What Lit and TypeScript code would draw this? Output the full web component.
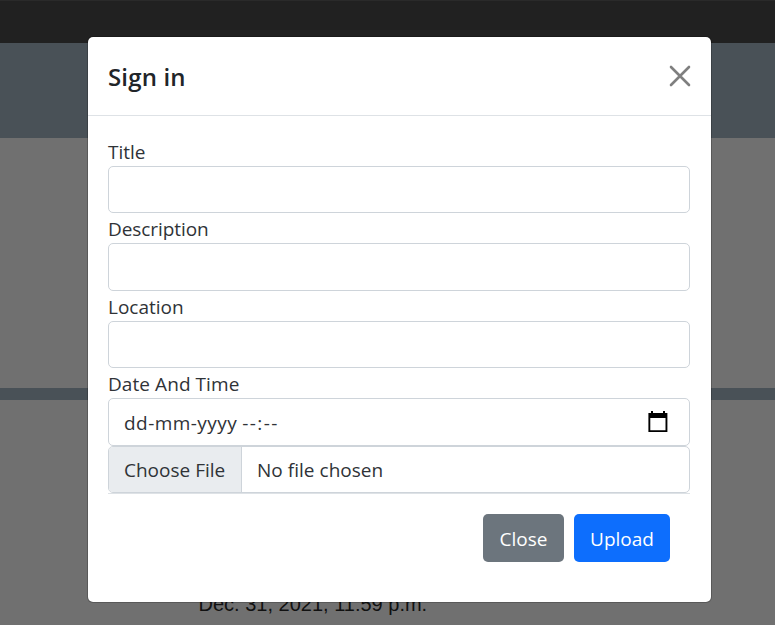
import { LitElement, html, css } from "lit";
import { customElement } from "lit/decorators.js";

@customElement("app-root")
export class AppRoot extends LitElement {
  static styles = css`
    :host {
      display: block;
      position: relative;
      width: 775px;
      height: 625px;
      overflow: hidden;
      background: #707070;
      color: #2f3337;
      font: 400 19px/30px "Open Sans", "Noto Sans", sans-serif;
    }
    * { box-sizing: border-box; }
    .page { height: 625px; display: flex; flex-direction: column; }
    .nav { height: 43px; background: #212121; border-top: 1px solid #2a2a2a; }
    .hero { height: 95px; background: #495157; }
    .rule { height: 12px; margin-top: 250px; background: #495157; }
    .date {
      margin: 193px 0 0 198.5px;
      font: 20px/23px "Liberation Sans", Arial, sans-serif;
      color: #111;
      white-space: nowrap;
    }
    .overlay {
      position: absolute;
      inset: 0;
      display: flex;
      align-items: flex-start;
      padding: 36px 0 0 87px;
    }
    .modal {
      width: 625px;
      height: 567px;
      background: #fff;
      background-clip: padding-box;
      border: 1px solid rgba(0, 0, 0, 0.2);
      border-radius: 6px;
    }
    .header {
      display: flex;
      align-items: center;
      justify-content: space-between;
      height: 79px;
      padding: 0 20px;
      border-bottom: 1px solid #dee2e6;
    }
    h5 {
      margin: 0;
      padding-top: 2px;
      color: #212529;
      font-size: 24px;
      line-height: 38px;
      font-weight: 600;
      letter-spacing: 0.15px;
    }
    .x { display: block; width: 22px; height: 22px; }
    .body { padding: 20px 21px 0 20px; }
    label { display: block; height: 30px; padding-top: 1px; }
    span, h5 { white-space: nowrap; }
    .control {
      display: flex;
      align-items: center;
      height: 47.4px;
      border: 1px solid #ced4da;
      border-radius: 5px;
      background: #fff;
      overflow: hidden;
    }
    .when { justify-content: space-between; padding: 0 21px 0 15px; }
    .when div { padding-top: 2px; }
    .day { letter-spacing: 0.45px; }
    .clock { letter-spacing: 1.45px; }
    .pick {
      height: 100%;
      width: 133px;
      padding: 8px 0 0 15px;
      background: #e9ecef;
      border-right: 1px solid #ced4da;
    }
    .none { padding: 1px 0 0 15px; }
    .none span { letter-spacing: 0.03px; }
    .description { letter-spacing: -0.07px; }
    .datetime { letter-spacing: 0.07px; }
    .footer {
      display: flex;
      justify-content: flex-end;
      gap: 10px;
      border-top: 1px solid #dee2e6;
      padding: 20px 20px 0 0;
    }
    .btn {
      height: 48px;
      border: 0;
      border-radius: 5px;
      padding: 2px 0 0;
      color: #fff;
      font: inherit;
    }
    .close { width: 81px; background: #6c757d; }
    .upload { width: 96px; background: #0d6efd; }
  `;

  render() {
    return html`
      <div class="page">
        <div class="nav"></div>
        <div class="hero"></div>
        <div class="rule"></div>
        <div class="date"><span>Dec. 31, 2021, 11:59 p.m.</span></div>
      </div>
      <div class="overlay">
        <div class="modal">
          <div class="header">
            <h5>Sign in</h5>
            <svg class="x" viewBox="0 0 22 22" stroke="#7f7f7f" stroke-width="2.6" stroke-linecap="round">
              <path d="M2 2 20 20M20 2 2 20" />
            </svg>
          </div>
          <div class="body">
            <label><span>Title</span></label>
            <div class="control"></div>
            <label><span class="description">Description</span></label>
            <div class="control"></div>
            <label><span>Location</span></label>
            <div class="control"></div>
            <label><span class="datetime">Date And Time</span></label>
            <div class="control when">
              <div><span class="day">dd-mm-yyyy</span> <span class="clock">--:--</span></div>
              <svg width="20" height="22" viewBox="0 0 20 22">
                <path fill="#000" fill-rule="evenodd" d="M3 0h2v2h10V0h2v2h2.4v19H.4V2H3zM2.3 7v12.3h15.2V7z" />
              </svg>
            </div>
            <div class="control">
              <div class="pick"><span>Choose File</span></div>
              <div class="none"><span>No file chosen</span></div>
            </div>
            <div class="footer">
              <button class="btn close"><span>Close</span></button>
              <button class="btn upload"><span>Upload</span></button>
            </div>
          </div>
        </div>
      </div>
    `;
  }
}
